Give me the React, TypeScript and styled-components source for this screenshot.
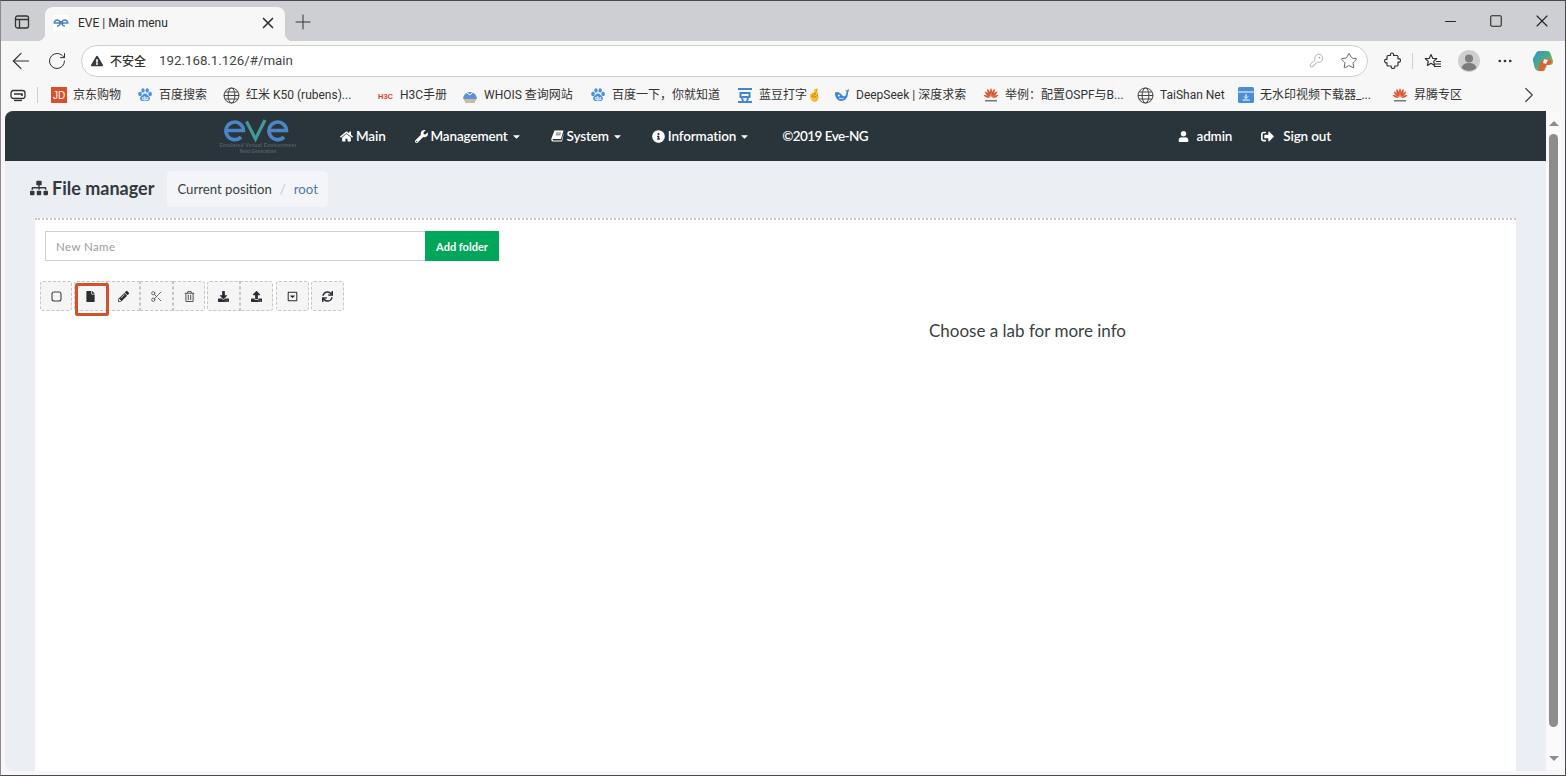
import React from "react";
import styled, { createGlobalStyle } from "styled-components";
import { ArrowLeft, RotateCw, KeyRound, Star, X, Plus, Minus, Square, ChevronRight, MoreHorizontal, Scissors } from "lucide-react";
import {
  FaHome, FaWrench, FaInfoCircle, FaUser, FaSignOutAlt, FaSitemap, FaFile, FaPencilAlt,
  FaRegTrashAlt, FaDownload, FaUpload, FaRegCaretSquareDown, FaSync, FaExclamationTriangle, FaCaretDown,
} from "react-icons/fa";

const Global = createGlobalStyle`
  html, body { margin: 0; padding: 0; height: 100%; overflow: hidden; }
  * { box-sizing: border-box; }
`;

const CHROME_FONT = `"Roboto", "Noto Sans CJK SC", sans-serif`;
const PAGE_FONT = `"Lato", "Noto Sans", sans-serif`;

const Window = styled.div`
  width: 1566px;
  height: 776px;
  display: flex;
  flex-direction: column;
  background: #f7f7f7;
  border-top: 1px solid #4a4654;
  border-right: 1px solid #4a4654;
  border-bottom: 1px solid #4a4654;
  border-left: 1px solid #8a8890;
  font-family: ${CHROME_FONT};
  color: #222;
  overflow: hidden;
`;

/* ---- tab strip ---- */
const TabStrip = styled.div`
  height: 40px;
  flex: none;
  display: flex;
  align-items: flex-end;
  background: #cdcfd2;
`;
const SideIcon = styled.div`
  width: 44px;
  height: 34px;
  display: flex;
  align-items: center;
  justify-content: center;
  padding: 0 3px 4px 0;
`;
const Tab = styled.div`
  position: relative;
  width: 240px;
  height: 34px;
  display: flex;
  align-items: center;
  background: #f7f7f7;
  border-radius: 8px 8px 0 0;
  padding: 0 8px 3px;
  &::before, &::after {
    content: "";
    position: absolute;
    bottom: 0;
    width: 8px;
    height: 8px;
  }
  &::before { left: -8px; background: radial-gradient(circle at 0 0, transparent 8px, #f7f7f7 8.5px); }
  &::after { right: -8px; background: radial-gradient(circle at 100% 0, transparent 8px, #f7f7f7 8.5px); }
`;
const TabFav = styled.span`
  width: 16px;
  height: 16px;
  background: #fff;
  display: flex;
  align-items: center;
  justify-content: center;
  flex: none;
`;
const TabTitle = styled.span`
  flex: 1;
  margin-left: 9px;
  font-size: 12px;
  color: #2b2b2b;
  white-space: nowrap;
`;
const TabClose = styled.span`
  display: flex;
`;
const NewTab = styled.div`
  width: 36px;
  height: 34px;
  display: flex;
  align-items: center;
  justify-content: center;
  padding-bottom: 4px;
`;
const WinControls = styled.div`
  margin-left: auto;
  height: 40px;
  display: flex;
  align-items: center;
`;
const WinBtn = styled.div`
  width: 46px;
  height: 40px;
  display: flex;
  align-items: center;
  justify-content: center;
`;

/* ---- address bar ---- */
const Toolbar = styled.div`
  height: 39px;
  flex: none;
  display: flex;
  align-items: center;
  padding-left: 2px;
`;
const ToolBtn = styled.div<{ $w?: number; $pl?: number }>`
  width: ${(p) => p.$w ?? 36}px;
  height: 32px;
  flex: none;
  display: flex;
  align-items: center;
  justify-content: center;
  padding-left: ${(p) => p.$pl ?? 0}px;
`;
const AddressBar = styled.div`
  width: 1287px;
  height: 32px;
  margin-left: 6px;
  flex: none;
  display: flex;
  align-items: center;
  background: #fff;
  border: 1px solid #cfcfcf;
  border-radius: 16px;
  padding: 0 9px 0 9px;
`;
const Insecure = styled.span`
  margin-left: 7px;
  font-size: 12px;
  font-weight: 500;
  color: #333;
`;
const Url = styled.span`
  margin-left: 13px;
  font-size: 13.3px;
  color: #444;
  flex: 1;
`;
const AddrIcon = styled.span<{ $ml: number }>`
  display: flex;
  margin-left: ${(p) => p.$ml}px;
`;
const Divider = styled.span`
  width: 1px;
  height: 16px;
  background: #cfcfcf;
  flex: none;
`;

/* ---- bookmarks ---- */
const Bookmarks = styled.div`
  height: 31px;
  flex: none;
  display: flex;
  align-items: center;
  padding-bottom: 1px;
  font-size: 12px;
  color: #333;
`;
const BarLead = styled.div`
  width: 50px;
  flex: none;
  display: flex;
  align-items: center;
  padding-left: 9px;
  gap: 11px;
`;
const Bookmark = styled.div<{ $w: number }>`
  width: ${(p) => p.$w}px;
  height: 17px;
  flex: none;
  display: flex;
  align-items: center;
  gap: 6px;
  white-space: nowrap;
  line-height: 16px;
`;
const BarEnd = styled.div`
  margin-left: auto;
  margin-right: 23px;
  display: flex;
`;

/* ---- viewport ---- */
const Viewport = styled.div`
  flex: 1;
  min-height: 0;
  display: flex;
  margin: 0 4px 4px 4px;
  border-radius: 8px;
  overflow: hidden;
`;
const Page = styled.div`
  flex: 1;
  min-width: 0;
  display: flex;
  flex-direction: column;
  background: #ebeef3;
  font-family: ${PAGE_FONT};
`;
const Scrollbar = styled.div`
  width: 15px;
  flex: none;
  background: #fafafa;
  display: flex;
  flex-direction: column;
  align-items: center;
  padding: 10px 0 10px;
`;
const ScrollThumb = styled.div`
  width: 9px;
  flex: 1;
  margin: 8px 0 29px;
  border-radius: 5px;
  background: #8d8d8d;
`;
const ScrollArrow = styled.div<{ $down?: boolean }>`
  width: 0;
  height: 0;
  border-left: 5px solid transparent;
  border-right: 5px solid transparent;
  ${(p) => (p.$down ? "border-top: 5px solid #8d8d8d;" : "border-bottom: 5px solid #8d8d8d;")}
`;

/* ---- eve nav ---- */
const Nav = styled.nav`
  height: 50px;
  flex: none;
  display: flex;
  align-items: center;
  background: #2a343b;
  color: #fff;
  font-size: 13.5px;
  font-weight: 600;
  letter-spacing: -0.15px;
`;
const LogoBox = styled.div`
  margin-left: 208px;
  width: 90px;
  height: 48px;
  flex: none;
  display: flex;
`;
const NavGroup = styled.div`
  display: flex;
  align-items: center;
  gap: 29px;
  margin-left: 37px;
`;
const NavRight = styled.div`
  margin-left: auto;
  margin-right: 215px;
  display: flex;
  align-items: center;
  gap: 29px;
`;
const NavItem = styled.div<{ $gap?: number }>`
  display: flex;
  align-items: center;
  gap: ${(p) => p.$gap ?? 3}px;
  white-space: nowrap;
`;
const Copyright = styled(NavItem)`
  margin-left: 3px;
  letter-spacing: -0.55px;
`;

/* ---- header ---- */
const Header = styled.div`
  height: 57px;
  flex: none;
  display: flex;
  align-items: center;
  padding: 0 0 1px 25px;
`;
const Title = styled.h1`
  margin: 0 0 2px;
  display: flex;
  align-items: center;
  gap: 4px;
  font-size: 18px;
  font-weight: 700;
  color: #33383d;
`;
const Crumbs = styled.div`
  margin-left: 13px;
  height: 36px;
  display: flex;
  align-items: center;
  gap: 8px;
  padding: 0 10px;
  background: #f3f5f8;
  border-radius: 4px;
  font-size: 13.2px;
  color: #3a3f44;
`;
const CrumbSep = styled.span`
  color: #c8c8c8;
`;
const CrumbLink = styled.span`
  color: #4b7aa8;
`;

/* ---- panel ---- */
const Panel = styled.main`
  flex: 1;
  min-height: 0;
  margin: 0 30px;
  background: #fff;
  border-top: 2px dotted #c6c6c6;
  display: grid;
  grid-template-columns: 504px 1fr;
`;
const LeftCol = styled.div`
  padding: 11px 0 0 5px;
`;
const FolderForm = styled.div`
  display: flex;
  margin-left: 5px;
  width: 454px;
  height: 30px;
`;
const NameInput = styled.input`
  flex: 1;
  min-width: 0;
  border: 1px solid #cfcfcf;
  border-right: none;
  padding: 0 10px;
  font-family: ${PAGE_FONT};
  font-size: 11.5px;
  letter-spacing: 0.4px;
  outline: none;
  &::placeholder { color: #9c9c9c; opacity: 1; }
`;
const AddButton = styled.button`
  width: 74px;
  border: none;
  background: #00a65a;
  color: #fff;
  font-family: ${PAGE_FONT};
  font-size: 11px;
  font-weight: 700;
  padding: 0;
`;
const ActionBar = styled.div`
  display: flex;
  margin-top: 20px;
  gap: 2px;
`;
const BtnGroup = styled.div`
  display: flex;
  &:nth-child(4) { margin-left: 1px; }
`;
const ActionBtn = styled.div<{ $w?: number; $muted?: boolean }>`
  position: relative;
  width: ${(p) => p.$w ?? 33}px;
  height: 30px;
  display: flex;
  align-items: center;
  justify-content: center;
  background: #f5f5f5;
  border: 1px dashed #c6c6c6;
  color: ${(p) => (p.$muted ? "#555" : "#2a2d33")};
  font-size: 11px;
  &:first-child { border-radius: 3px 0 0 3px; }
  &:last-child { border-radius: 0 3px 3px 0; }
  &:only-child { border-radius: 3px; }
`;
const Highlight = styled.span`
  position: absolute;
  left: 0;
  top: 1px;
  width: 34px;
  height: 33px;
  border: 3px solid #d2512f;
  border-radius: 2px;
  z-index: 2;
`;
const RightCol = styled.div`
  padding-top: 100px;
  text-align: center;
  font-size: 17px;
  color: #3a3f44;
`;

/* ---- drawings ---- */
const SidebarIcon = () => (
  <svg width="16" height="16" viewBox="0 0 16 16" fill="none" stroke="#333" strokeWidth="1.3">
    <rect x="1.5" y="2" width="13" height="12" rx="2" />
    <path d="M1.5 5.5H14.5M5.5 5.5V14" />
  </svg>
);
const EveFav = () => (
  <svg width="16" height="12" viewBox="0 0 16 12" fill="none" stroke="#4a86c5" strokeWidth="1.5">
    <path d="M7 6H1.2A3 3 0 1 1 4 9" />
    <path d="M9 6h5.8A3 3 0 1 0 12 9" />
    <path d="M6 7l2-3 2 3" stroke="#666" strokeWidth="1" />
  </svg>
);
const DeviceIcon = () => (
  <svg width="16" height="14" viewBox="0 0 16 14" fill="none" stroke="#333" strokeWidth="1.3">
    <rect x="1" y="2.5" width="14" height="8" rx="2.5" />
    <path d="M4 6h8v2" strokeWidth="1.6" />
    <path d="M4 12.5h8" />
  </svg>
);
const Globe = () => (
  <svg width="17" height="17" viewBox="0 0 17 17" fill="none" stroke="#444" strokeWidth="1">
    <circle cx="8.5" cy="8.5" r="7.5" />
    <ellipse cx="8.5" cy="8.5" rx="3.4" ry="7.5" />
    <path d="M1 8.5h15M2 5h13M2 12h13" />
  </svg>
);
const JdIcon = () => (
  <svg width="16" height="16" viewBox="0 0 16 16">
    <rect width="16" height="16" fill="#d9512c" />
    <text x="8" y="12" textAnchor="middle" fontSize="10" fontFamily="Liberation Sans" fill="#fff">JD</text>
  </svg>
);
const Paw = () => (
  <svg width="16" height="16" viewBox="0 0 16 16" fill="#4a90e0">
    <ellipse cx="3" cy="7" rx="1.8" ry="2.2" />
    <ellipse cx="6" cy="3.4" rx="1.7" ry="2.2" />
    <ellipse cx="10.2" cy="3.4" rx="1.7" ry="2.2" />
    <ellipse cx="13.1" cy="7" rx="1.8" ry="2.2" />
    <path d="M8 6.6c2 0 2.6 2 4 3 1.7 1.3 1 4.4-1.5 4.4-1 0-1.7-.4-2.5-.4s-1.5.4-2.5.4C3 14 2.3 10.9 4 9.6c1.4-1 2-3 4-3z" />
    <text x="8" y="13" textAnchor="middle" fontSize="5.5" fontWeight="700" fontFamily="Liberation Sans" fill="#fff">du</text>
  </svg>
);
const H3c = () => (
  <svg width="17" height="16" viewBox="0 0 17 16">
    <text x="8.5" y="11.5" textAnchor="middle" fontSize="7.5" fontWeight="700" fontFamily="Liberation Sans" fill="#d8452f">H3C</text>
  </svg>
);
const WhoisIcon = () => (
  <svg width="16" height="16" viewBox="0 0 16 16">
    <path d="M1 12A7 7 0 0 1 15 12" fill="#5a93d6" />
    <path d="M2 13h12M3 15h10" stroke="#b9a58f" strokeWidth="1.3" />
    <path d="M5 6l3 2 3-3" stroke="#fff" strokeWidth="1" fill="none" />
  </svg>
);
const Doudou = () => (
  <svg width="16" height="16" viewBox="0 0 16 16" fill="none" stroke="#3f86d0" strokeWidth="2">
    <path d="M1 2h14" />
    <path d="M3.5 6h9v4h-9zM1 15h14M5 11l1 3M11 11l-1 3" />
  </svg>
);
const Whale = () => (
  <svg width="16" height="14" viewBox="0 0 16 14">
    <path d="M1 4.5C4 3 6.5 5 8 7c1.5 1.8 3 1.5 3.8 0 .5-1 .7-2.500.7-3.500L11 1.800l2 .7L14.500 1l.5 2-1 1.200c.2 4.500-2.200 8.800-7 8.800C3.200 13 .6 8.500 1 4.500z" fill="#3f86d8" />
    <circle cx="4.8" cy="7.5" r="1" fill="#fff" />
    <path d="M5 10c1.500.8 3 .8 4.500.2" stroke="#fff" strokeWidth=".8" fill="none" />
  </svg>
);
const Huawei = () => (
  <svg width="16" height="16" viewBox="0 0 16 16" fill="#d9512c">
    <path d="M8 10C7 7 6.500 3 8 1c1.500 2 1 6 0 9z" />
    <path d="M7.500 10C5.500 8 3.500 4.500 4.500 2c2 1 3.500 5 3 8zM8.500 10c2-2 4-5.500 3-8-2 1-3.500 5-3 8z" />
    <path d="M7 10.500C4.500 9.500 2 7 1.800 4.500 4.500 5 6.500 8 7 10.500zM9 10.500c2.500-1 5-3.500 5.200-6C11.500 5 9.500 8 9 10.500z" />
    <path d="M6.500 11C4 11 1.500 9.800.5 8c2.500-.5 5 1 6 3zM9.500 11c2.500 0 5-1.200 6-3-2.500-.5-5 1-6 3z" />
    <rect x="2" y="13" width="12" height="1.5" fill="#777" />
  </svg>
);
const DownloadSite = () => (
  <svg width="16" height="16" viewBox="0 0 16 16">
    <rect width="16" height="16" rx="1.5" fill="#4a8ed6" />
    <rect y="4.5" width="16" height="1" fill="#fff" />
    <path d="M8 7v4M6 9.500l2 2 2-2M4.500 13h7" stroke="#fff" strokeWidth="1" fill="none" />
  </svg>
);
const PuzzleIcon = () => (
  <svg width="17" height="17" viewBox="0 0 17 17" fill="none" stroke="#333" strokeWidth="1.2" strokeLinejoin="round">
    <path d="M6.500 3.500C6.200 1.500 7 1 8 1s2 .8 1.500 2.500H13c.6 0 1 .4 1 1v2.300c1.800-.4 2.500.5 2.500 1.700s-.8 2-2.500 1.600V13c0 .6-.4 1-1 1h-2.200c.3 1.500-.5 2.500-1.800 2.500s-2.100-1-1.800-2.500H4c-.6 0-1-.4-1-1v-2.200C1.500 11 .6 10.200.6 9S1.500 7 3 7.400V4.500c0-.6.4-1 1-1z" />
  </svg>
);
const Favorites = () => (
  <svg width="18" height="18" viewBox="0 0 18 18" fill="none" stroke="#333" strokeWidth="1.2" strokeLinejoin="round">
    <path d="M7 2.500l1.700 3.800 4 .4-3 2.700.9 4L7 11.300 3.400 13.400l.9-4-3-2.700 4-.4z" />
    <path d="M12 9.500h5M11 12h6M10 14.500h7" />
  </svg>
);
const Avatar = () => (
  <svg width="22" height="22" viewBox="0 0 22 22">
    <circle cx="11" cy="11" r="11" fill="#cfcfcf" />
    <circle cx="11" cy="8.5" r="4" fill="#7d7d7d" />
    <path d="M3.500 18c1-4 4-5 7.500-5s6.500 1 7.500 5a11 11 0 0 1-15 0z" fill="#7d7d7d" />
  </svg>
);
const Copilot = () => (
  <svg width="22" height="22" viewBox="0 0 22 22">
    <defs>
      <linearGradient id="cpa" x1="0" y1="0" x2="1" y2="1">
        <stop offset="0" stopColor="#3d8fd8" />
        <stop offset="0.5" stopColor="#47b07a" />
        <stop offset="1" stopColor="#f0a040" />
      </linearGradient>
    </defs>
    <path d="M7 1h8c2.500 0 3.500 2 4 4l2 6c.5 2-1 4-3 4h-3l-2 5c-.5 1-1.500 1-2.500 1H7C4.500 21 3 19 2.500 17L1 11c-.5-2 .5-4 1.500-5L4 3c.5-1 1.500-2 3-2z" fill="url(#cpa)" />
    <path d="M13 9l6 1c1 2 0 5-3 5h-2l-3 6H8c-1 0-2-1-2-2l3-8z" fill="#dc5f3c" />
    <path d="M12 9l4 1-2 4-3-1z" fill="#f4f0e8" />
  </svg>
);
const BookIcon = () => (
  <svg width="13" height="12" viewBox="0 0 13 12" fill="#fff">
    <path d="M3.500.5H12.500L10 9H2.200C1.500 9 1.400 10.500 2.200 10.500H10.500L12.500 3.500V4.500L11 11.500H2C.5 11.500 0 10 .4 8.500z" />
    <path d="M5 3h5M4.600 4.800h5" stroke="#2a343b" strokeWidth=".7" />
  </svg>
);
const CheckboxIcon = () => (
  <svg width="11" height="11" viewBox="0 0 11 11" fill="none" stroke="#3c4048" strokeWidth="1.1">
    <rect x="1" y="1" width="9" height="9" rx="2" />
  </svg>
);
const EveLogo = () => (
  <svg width="90" height="48" viewBox="0 0 90 48" fill="none">
    <g stroke="#4a86c5" strokeWidth="3.6">
      <path d="M13.500 18.500H30.500A8.800 8.800 0 1 0 28 25" />
      <path d="M56.500 18.500H73.500A8.800 8.800 0 1 0 71 25" />
    </g>
    <path d="M33.500 9.500L42.500 27L52 8" stroke="#3f9a9a" strokeWidth="3.2" />
    <text x="45" y="34.5" textAnchor="middle" fontSize="5" letterSpacing="0.2" fontFamily="Liberation Sans" fill="#555d63">Emulated Virtual Environment</text>
    <text x="45" y="40.5" textAnchor="middle" fontSize="5" fontFamily="Liberation Sans" fill="#555d63">Next Generation</text>
  </svg>
);

const bookmarks: { w: number; icon: React.ReactNode; label: string }[] = [
  { w: 86, icon: <JdIcon />, label: "京东购物" },
  { w: 86, icon: <Paw />, label: "百度搜索" },
  { w: 154, icon: <Globe />, label: "红米 K50 (rubens)..." },
  { w: 85, icon: <H3c />, label: "H3C手册" },
  { w: 128, icon: <WhoisIcon />, label: "WHOIS 查询网站" },
  { w: 147, icon: <Paw />, label: "百度一下，你就知道" },
  { w: 97, icon: <Doudou />, label: "蓝豆打字🤞" },
  { w: 149, icon: <Whale />, label: "DeepSeek | 深度求索" },
  { w: 154, icon: <Huawei />, label: "举例：配置OSPF与B..." },
  { w: 101, icon: <Globe />, label: "TaiShan Net" },
  { w: 154, icon: <DownloadSite />, label: "无水印视频下载器_..." },
  { w: 80, icon: <Huawei />, label: "昇腾专区" },
];

export default function App() {
  return (
    <>
      <Global />
      <Window>
        <TabStrip>
          <SideIcon><SidebarIcon /></SideIcon>
          <Tab>
            <TabFav><EveFav /></TabFav>
            <TabTitle>EVE | Main menu</TabTitle>
            <TabClose><X size={18} strokeWidth={2.2} color="#333" /></TabClose>
          </Tab>
          <NewTab><Plus size={24} strokeWidth={1} color="#333" /></NewTab>
          <WinControls>
            <WinBtn><Minus size={17} strokeWidth={1.4} color="#222" /></WinBtn>
            <WinBtn><Square size={14} strokeWidth={1.8} color="#222" /></WinBtn>
            <WinBtn><X size={20} strokeWidth={1.3} color="#222" /></WinBtn>
          </WinControls>
        </TabStrip>

        <Toolbar>
          <ToolBtn><ArrowLeft size={26} strokeWidth={1.1} color="#333" /></ToolBtn>
          <ToolBtn><RotateCw size={20} strokeWidth={1.2} color="#333" /></ToolBtn>
          <AddressBar>
            <FaExclamationTriangle size={12} color="#3a3a3a" />
            <Insecure>不安全</Insecure>
            <Url>192.168.1.126/#/main</Url>
            <AddrIcon $ml={14}><KeyRound size={15} strokeWidth={1} color="#888" /></AddrIcon>
            <AddrIcon $ml={16}><Star size={18} strokeWidth={1.1} color="#444" /></AddrIcon>
          </AddressBar>
          <ToolBtn $w={44} $pl={4}><PuzzleIcon /></ToolBtn>
          <Divider />
          <ToolBtn $w={40}><Favorites /></ToolBtn>
          <ToolBtn $w={32}><Avatar /></ToolBtn>
          <ToolBtn $w={40}><MoreHorizontal size={18} strokeWidth={1.6} color="#333" /></ToolBtn>
          <ToolBtn $w={36}><Copilot /></ToolBtn>
        </Toolbar>

        <Bookmarks>
          <BarLead><DeviceIcon /><Divider /></BarLead>
          {bookmarks.map((b) => (
            <Bookmark key={b.label + b.w} $w={b.w}>{b.icon}<span>{b.label}</span></Bookmark>
          ))}
          <BarEnd><ChevronRight size={26} strokeWidth={1.1} color="#444" /></BarEnd>
        </Bookmarks>

        <Viewport>
          <Page>
            <Nav>
              <LogoBox><EveLogo /></LogoBox>
              <NavGroup>
                <NavItem><FaHome size={13} />Main</NavItem>
                <NavItem><FaWrench size={13} />Management<FaCaretDown size={11} /></NavItem>
                <NavItem><BookIcon />System<FaCaretDown size={11} /></NavItem>
                <NavItem><FaInfoCircle size={13} />Information<FaCaretDown size={11} /></NavItem>
                <Copyright>©2019 Eve-NG</Copyright>
              </NavGroup>
              <NavRight>
                <NavItem $gap={8}><FaUser size={11} />admin</NavItem>
                <NavItem $gap={9}><FaSignOutAlt size={13} />Sign out</NavItem>
              </NavRight>
            </Nav>
            <Header>
              <Title><FaSitemap size={18} />File manager</Title>
              <Crumbs>Current position<CrumbSep>/</CrumbSep><CrumbLink>root</CrumbLink></Crumbs>
            </Header>
            <Panel>
              <LeftCol>
                <FolderForm>
                  <NameInput placeholder="New Name" />
                  <AddButton>Add folder</AddButton>
                </FolderForm>
                <ActionBar>
                  <BtnGroup><ActionBtn $w={32}><CheckboxIcon /></ActionBtn></BtnGroup>
                  <BtnGroup>
                    <ActionBtn><FaFile /><Highlight /></ActionBtn>
                    <ActionBtn><FaPencilAlt /></ActionBtn>
                    <ActionBtn $muted><Scissors size={13} strokeWidth={1.6} /></ActionBtn>
                    <ActionBtn $w={32} $muted><FaRegTrashAlt /></ActionBtn>
                  </BtnGroup>
                  <BtnGroup>
                    <ActionBtn><FaDownload /></ActionBtn>
                    <ActionBtn><FaUpload /></ActionBtn>
                  </BtnGroup>
                  <BtnGroup><ActionBtn><FaRegCaretSquareDown /></ActionBtn></BtnGroup>
                  <BtnGroup><ActionBtn><FaSync /></ActionBtn></BtnGroup>
                </ActionBar>
              </LeftCol>
              <RightCol>Choose a lab for more info</RightCol>
            </Panel>
          </Page>
          <Scrollbar>
            <ScrollArrow />
            <ScrollThumb />
            <ScrollArrow $down />
          </Scrollbar>
        </Viewport>
      </Window>
    </>
  );
}
